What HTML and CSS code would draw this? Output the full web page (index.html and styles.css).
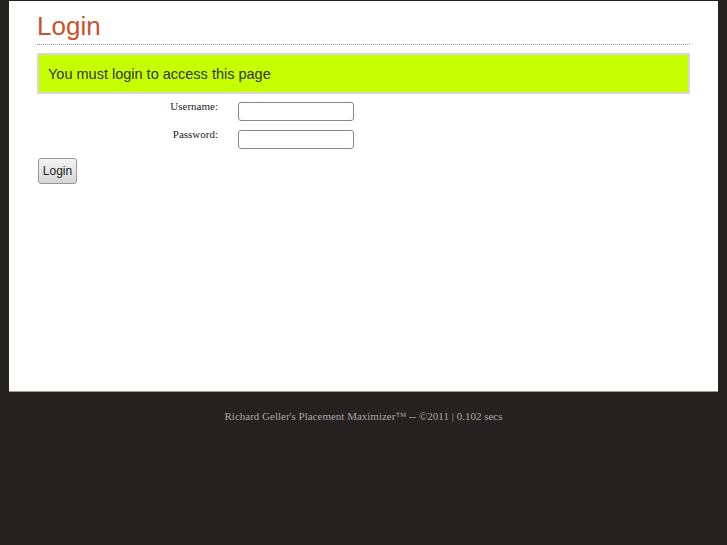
FILE: index.html
```html
<!DOCTYPE html>
<html lang="en">
<head>
    <meta charset="UTF-8">
    <title>Login</title>
    <link rel="stylesheet" href="styles.css">
</head>
<body>
    <div class="page">
        <div class="content">
            <h1>Login</h1>
            <div class="notice">You must login to access this page</div>
            <form class="login-form">
                <div class="row">
                    <label for="username">Username:</label>
                    <input type="text" id="username">
                </div>
                <div class="row">
                    <label for="password">Password:</label>
                    <input type="password" id="password">
                </div>
                <button type="button">Login</button>
            </form>
        </div>
    </div>
    <div class="footer">Richard Geller's Placement Maximizer&trade; -- &copy;2011 | 0.102 secs</div>
</body>
</html>
```

FILE: styles.css
```css
body {
    margin: 0;
    background-color: #252120;
    font-family: "Liberation Sans", Arial, sans-serif;
    color: #333;
}
.page {
    padding-top: 1px;
}
.content {
    background-color: #fff;
    margin: 0 9px;
    height: 390px;
    padding: 0 28px;
    border-bottom: 1px solid #999;
}
h1 {
    margin: 0;
    padding-top: 9px;
    font-size: 26px;
    font-weight: normal;
    line-height: 32px;
    color: #c9532c;
    border-bottom: 1px dotted #999;
    padding-bottom: 2px;
}
.notice {
    margin-top: 8px;
    background-color: #c6ff00;
    border: 2px solid #d8d8d8;
    height: 37px;
    line-height: 38px;
    padding-left: 9px;
    font-size: 14.5px;
    color: #333;
}
.login-form {
    margin-top: 8px;
}
.row {
    display: grid;
    grid-template-columns: 181px 116px;
    column-gap: 20px;
    align-items: start;
    margin-bottom: 9px;
}
label {
    text-align: right;
    font-family: "Liberation Serif", "Times New Roman", serif;
    font-size: 11px;
    color: #222;
    line-height: 12px;
    margin-top: -2px;
}
input {
    width: 116px;
    height: 19px;
    box-sizing: border-box;
    border: 1px solid #888;
    border-radius: 3px;
    margin: 0;
    padding: 1px 3px;
}
button {
    margin: 0 0 0 1px;
    width: 39px;
    height: 26px;
    padding: 0;
    font-family: "Liberation Sans", Arial, sans-serif;
    font-size: 12px;
    color: #222;
    background: linear-gradient(#f4f4f4, #d6d6d6);
    border: 1px solid #999;
    border-radius: 3px;
}
.footer {
    text-align: center;
    font-family: "Liberation Serif", "Times New Roman", serif;
    font-size: 11px;
    color: #a9a5a3;
    padding-top: 18px;
}
```
